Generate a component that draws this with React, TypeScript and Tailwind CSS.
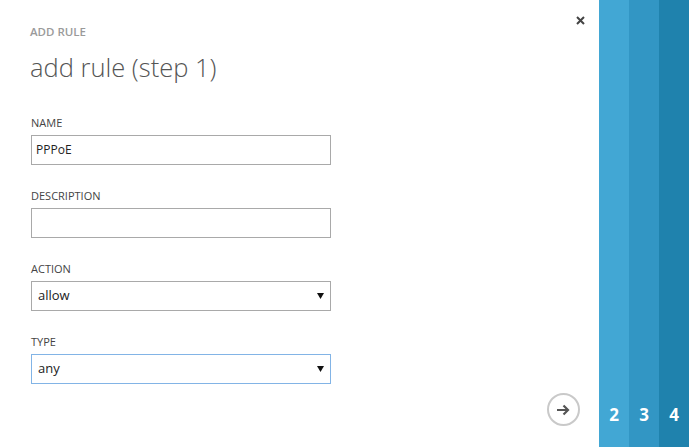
import React from 'react';

function Field({ label, children }: { label: string; children: React.ReactNode }) {
  return (
    <div className="mb-[23px] flex flex-col">
      <label className="mb-[4px] h-4 text-[11px] leading-4 text-[#444]">{label}</label>
      {children}
    </div>
  );
}

function SelectBox({ value, focused = false }: { value: string; focused?: boolean }) {
  return (
    <div
      className={`flex h-[30px] w-[300px] items-center justify-between border pl-[6px] pr-[5px] text-[13px] text-[#222] ${
        focused ? 'border-[#82b4e6]' : 'border-[#a9a9a9]'
      }`}
    >
      <span>{value}</span>
      <svg width="7" height="6" viewBox="0 0 7 6" className="mr-[1px]">
        <path d="M0 0 H7 L3.5 6 Z" fill="#111" />
      </svg>
    </div>
  );
}

export default function App() {
  return (
    <div
      className="flex h-[447px] w-[689px] bg-white"
      style={{ fontFamily: '"Open Sans", "Noto Sans", sans-serif' }}
    >
      {/* Form panel */}
      <div className="relative flex flex-1 flex-col pl-[30px] pt-[24px]">
        <div className="h-4 text-[11.5px] font-semibold leading-4 text-[#9a9a9a]">ADD RULE</div>
        <h1 className="mt-[11px] h-8 text-[25.5px] font-light leading-8 text-[#555]">add rule (step 1)</h1>

        <div className="mt-[32px] pl-[1px]">
          <Field label="NAME">
            <div className="flex h-[30px] w-[300px] items-center border border-[#a9a9a9] pl-[4px] text-[12px] text-[#222]">
              PPPoE
            </div>
          </Field>
          <Field label="DESCRIPTION">
            <div className="h-[30px] w-[300px] border border-[#a9a9a9]" />
          </Field>
          <Field label="ACTION">
            <SelectBox value="allow" />
          </Field>
          <Field label="TYPE">
            <SelectBox value="any" focused />
          </Field>
        </div>

        {/* Close */}
        <button className="absolute right-[13px] top-[14px] flex h-3 w-3 items-center justify-center">
          <svg width="9" height="9" viewBox="0 0 9 9">
            <path d="M1 1 L8 8 M8 1 L1 8" stroke="#444" strokeWidth="2" />
          </svg>
        </button>

        {/* Next */}
        <button className="absolute bottom-[21px] right-[19px] flex h-[33px] w-[33px] items-center justify-center rounded-full border-2 border-[#c9c9c9]">
          <svg width="15" height="12" viewBox="0 0 15 12">
            <path d="M1 6 H12 M7.5 1.5 L12 6 L7.5 10.5" stroke="#555" strokeWidth="2.2" fill="none" />
          </svg>
        </button>
      </div>

      {/* Step stripes */}
      <div className="flex h-full">
        <div className="flex w-[30px] items-end justify-center bg-[#42a7d4] pb-[22px] text-[17px] font-bold leading-5 text-white">2</div>
        <div className="flex w-[30px] items-end justify-center bg-[#3296c4] pb-[22px] text-[17px] font-bold leading-5 text-white">3</div>
        <div className="flex w-[30px] items-end justify-center bg-[#1f82ad] pb-[22px] text-[17px] font-bold leading-5 text-white">4</div>
      </div>
    </div>
  );
}
